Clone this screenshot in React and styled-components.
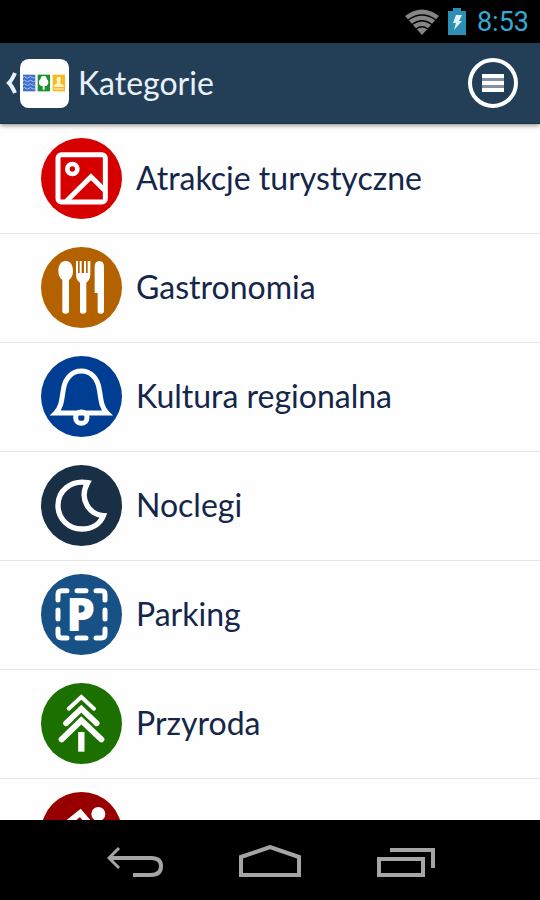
import React from 'react'
import styled, { createGlobalStyle } from 'styled-components';


const GlobalStyle = createGlobalStyle`
  * {
    box-sizing: border-box;
  }

  body {
    margin: 0;
    background-color: #000;
    font-family: Lato, "Open Sans", sans-serif;
  }
`;

const Screen = styled.div`
  display: flex;
  flex-direction: column;
  height: 100vh;
  overflow: hidden;
`;

const StatusBar = styled.div`
  display: flex;
  flex-shrink: 0;
  align-items: center;
  justify-content: flex-end;
  height: 43px;
  padding: 0 11px;
  background-color: #000;
`;

const Clock = styled.time`
  margin-left: 11px;
  color: #33a9d6;
  font-family: Roboto, sans-serif;
  font-size: 27px;
  line-height: 44px;
`;

const BatterySvg = styled.svg`
  margin-left: 8px;
`;

const Header = styled.header`
  display: flex;
  flex-shrink: 0;
  align-items: center;
  justify-content: space-between;
  height: 81px;
  padding: 0 22px 0 6px;
  background-color: #233f58;
  border-bottom: 1px solid #1b3042;
  box-shadow: 0 1px 5px rgba(0, 0, 0, 0.5);
  z-index: 1;
`;

const BackButton = styled.button`
  display: flex;
  align-items: center;
  gap: 3px;
  padding: 0;
  border: none;
  background: none;
  cursor: pointer;
`;

const HeaderLeft = styled.div`
  display: flex;
  align-items: center;
  gap: 9px;
`;

const Title = styled.h1`
  margin: 0;
  color: #e9f0f8;
  font-size: 32px;
  font-weight: 400;
  line-height: 40px;
`;

const MenuButton = styled.button`
  display: flex;
  align-items: center;
  justify-content: center;
  width: 50px;
  height: 50px;
  padding: 0;
  border: 4px solid #fff;
  border-radius: 50%;
  background: none;
  cursor: pointer;
`;

const List = styled.ul`
  flex: 1;
  min-height: 0;
  margin: 0;
  padding: 1px 0 0;
  overflow: hidden;
  background-color: #fefefe;
  list-style: none;
`;

const Row = styled.li`
  border-bottom: 1px solid #e6e6e6;
`;

const RowLink = styled.a`
  display: flex;
  align-items: center;
  gap: 14px;
  height: 108px;
  padding: 0 41px 2px;
  color: #14264a;
  font-size: 32px;
  line-height: 40px;
  text-decoration: none;
`;

const Badge = styled.span`
  flex-shrink: 0;
  width: 81px;
  height: 81px;
  border-radius: 50%;
  background-color: ${(props) => props.$color};

  svg {
    display: block;
    width: 100%;
    height: 100%;
  }
`;

const NavBar = styled.nav`
  display: flex;
  flex-shrink: 0;
  align-items: center;
  justify-content: center;
  gap: 76px;
  height: 80px;
  padding: 4px 0 0 2px;
  background-color: #000;
`;

const NavButton = styled.button`
  display: flex;
  padding: 0;
  border: none;
  background: none;
  cursor: pointer;
`;


function WifiIcon() {
  return (
    <svg width="36" height="28" viewBox="0 0 36 28" aria-hidden="true">
      <path d="M1 8Q18 -5 35 8L18 27Z" fill="#858585" />
      <g fill="none" stroke="#000" strokeWidth="1.3">
        <path d="M4 12Q18 2 32 12" />
        <path d="M8 16.5Q18 9 28 16.5" />
        <path d="M12 21Q18 16.5 24 21" />
      </g>
    </svg>
  )
}

function BatteryIcon() {
  return (
    <BatterySvg width="18" height="28" viewBox="0 0 18 28" aria-hidden="true">
      <path d="M5 0h8v3h5v24H0V3h5z" fill="#2c8fb5" />
      <path d="M8 7h6l-3 6h3L6 22l2-7H5z" fill="#e4f4fa" />
    </BatterySvg>
  )
}

function AppLogo() {
  return (
    <svg width="49" height="49" viewBox="0 0 147 147" aria-hidden="true">
      <rect width="147" height="147" rx="26" fill="#fff" />
      <rect x="9" y="47" width="37" height="50" fill="#3f6fc9" />
      <g fill="none" stroke="#a9c3f0" strokeWidth="3">
        <path d="M9 55q5 -5 9 0t9 0t9 0t10 0" />
        <path d="M9 66q5 -5 9 0t9 0t9 0t10 0" />
        <path d="M9 77q5 -5 9 0t9 0t9 0t10 0" />
        <path d="M9 88q5 -5 9 0t9 0t9 0t10 0" />
      </g>
      <rect x="53" y="47" width="37" height="50" fill="#16942a" />
      <path d="M71 51c9 0 9 6 9 9c8 5 6 19 -2 21h-4v11h-6V81h-4c-8 -2 -10 -16 -2 -21c0 -3 0 -9 9 -9z" fill="#fff" />
      <rect x="98" y="47" width="37" height="50" fill="#fbb91c" />
      <path d="M116 53c6 0 7 5 6 12l-2 8l11 6v5h-30v-5l11 -6l-2 -8c-1 -7 0 -12 6 -12z" fill="#fff3cf" />
      <path d="M102 90h29" stroke="#fff3cf" strokeWidth="3" />
    </svg>
  )
}

function PictureIcon() {
  return (
    <svg viewBox="0 0 243 243" fill="none" stroke="#fff" strokeWidth="15" aria-hidden="true">
      <rect x="51" y="50" width="142" height="142" rx="10" />
      <circle cx="94" cy="93" r="15" strokeWidth="14" />
      <path d="M76 190L150 116L190 156" />
    </svg>
  )
}

function CutleryIcon() {
  return (
    <svg viewBox="0 0 243 243" fill="#fff" aria-hidden="true">
      <path d="M74 42c14 0 22 12 22 30c0 14 -5 22 -12 27V192q0 8 -10 8t-10 -8V99c-7 -5 -12 -13 -12 -27c0 -18 8 -30 22 -30z" />
      <path d="M105 42h6v36h5V42h6v36h7V42h6v36h5V42h8v40c0 13 -5 20 -12 25V192q0 8 -10 8t-9 -8V107c-7 -5 -12 -12 -12 -25z" />
      <path d="M161 138V60q0 -18 14 -18t14 18V192q0 8 -10 8t-9 -8V138z" />
    </svg>
  )
}

function BellIcon() {
  return (
    <svg viewBox="0 0 243 243" fill="none" stroke="#fff" strokeWidth="15" aria-hidden="true">
      <path d="M44 171C62 153 62 130 67 101C72 66 93 45 121 45C149 45 170 66 175 101C180 130 180 153 198 171Z" />
      <circle cx="121" cy="185" r="17" />
    </svg>
  )
}

function MoonIcon() {
  return (
    <svg viewBox="0 0 243 243" fill="none" stroke="#fff" strokeWidth="16" aria-hidden="true">
      <path d="M140 53C88 44 51 79 51 121C51 162 84 192 122 192C153 192 177 177 187 152C146 149 112 103 140 53Z" />
    </svg>
  )
}

function ParkingIcon() {
  return (
    <svg viewBox="0 0 243 243" fill="none" stroke="#fff" strokeWidth="15" strokeLinecap="round" aria-hidden="true">
      <path d="M51 78V61Q51 50 62 50H78M165 50H181Q192 50 192 61V78M192 165V181Q192 192 181 192H165M78 192H62Q51 192 51 181V165" />
      <path d="M108 50H135M108 192H135M51 108V135M192 108V135" />
      <text x="76" y="171" fill="#fff" stroke="none" fontFamily="Open Sans" fontSize="137" fontWeight="800">P</text>
    </svg>
  )
}

function TreeIcon() {
  return (
    <svg viewBox="0 0 243 243" fill="none" stroke="#fff" strokeLinecap="round" aria-hidden="true">
      <path d="M83 77L121 42L159 77" strokeWidth="12" />
      <path d="M75 121L121 77L167 121" strokeWidth="17" />
      <path d="M62 169L121 112L181 169" strokeWidth="18" />
      <path d="M121 147V206" strokeWidth="19" strokeLinecap="butt" />
    </svg>
  )
}

function SportIcon() {
  return (
    <svg viewBox="0 0 243 243" fill="none" stroke="#fff" strokeWidth="18" aria-hidden="true">
      <path d="M74 98L118 63L150 100L110 150" />
      <circle cx="172" cy="66" r="21" fill="#fff" stroke="none" />
    </svg>
  )
}

const categories = [
  { name: 'Atrakcje turystyczne', color: '#d60000', Icon: PictureIcon },
  { name: 'Gastronomia', color: '#b46200', Icon: CutleryIcon },
  { name: 'Kultura regionalna', color: '#003e93', Icon: BellIcon },
  { name: 'Noclegi', color: '#192f45', Icon: MoonIcon },
  { name: 'Parking', color: '#175186', Icon: ParkingIcon },
  { name: 'Przyroda', color: '#1b7000', Icon: TreeIcon },
  { name: '', label: 'Sport', color: '#980000', Icon: SportIcon },
];


function App() {
  return (
    <Screen>
      <GlobalStyle />
      <StatusBar>
        <WifiIcon />
        <BatteryIcon />
        <Clock>8:53</Clock>
      </StatusBar>

      <Header>
        <HeaderLeft>
          <BackButton aria-label="Wstecz">
            <svg width="11" height="22" viewBox="0 0 11 22" fill="none" stroke="#e9f0f8" strokeWidth="4">
              <path d="M9 1Q6 8 3 11Q6 14 9 21" />
            </svg>
            <AppLogo />
          </BackButton>
          <Title>Kategorie</Title>
        </HeaderLeft>
        <MenuButton aria-label="Menu">
          <svg width="22" height="18" viewBox="0 0 22 18">
            <path d="M0 0h22v18H0z" fill="#7f91a2" />
            <path d="M0 0h22v4H0zM0 7h22v4H0zM0 14h22v4H0z" fill="#fff" />
          </svg>
        </MenuButton>
      </Header>

      <List>
        {categories.map(({ name, label, color, Icon }) => (
          <Row key={color}>
            <RowLink href="#" aria-label={label}>
              <Badge $color={color}><Icon /></Badge>
              {name}
            </RowLink>
          </Row>
        ))}
      </List>

      <NavBar>
        <NavButton aria-label="Wstecz">
          <svg width="56" height="34" viewBox="0 0 56 34" fill="none" stroke="#a5a5a5" strokeWidth="4">
            <path d="M2 13H44Q54 13 54 21Q54 30 44 30H26" />
            <path d="M12 3L2 13L12 23" strokeWidth="3" />
          </svg>
        </NavButton>
        <NavButton aria-label="Ekran startowy">
          <svg width="62" height="34" viewBox="0 0 62 34" fill="none" stroke="#a5a5a5" strokeWidth="4">
            <path d="M2 12L31 2L60 12V30H2Z" />
          </svg>
        </NavButton>
        <NavButton aria-label="Ostatnie aplikacje">
          <svg width="58" height="34" viewBox="0 0 58 34" fill="none" stroke="#a5a5a5" strokeWidth="4">
            <path d="M2 14H46V30H2Z" />
            <path d="M13 5H56V23" />
          </svg>
        </NavButton>
      </NavBar>
    </Screen>
  )
}

export default App
